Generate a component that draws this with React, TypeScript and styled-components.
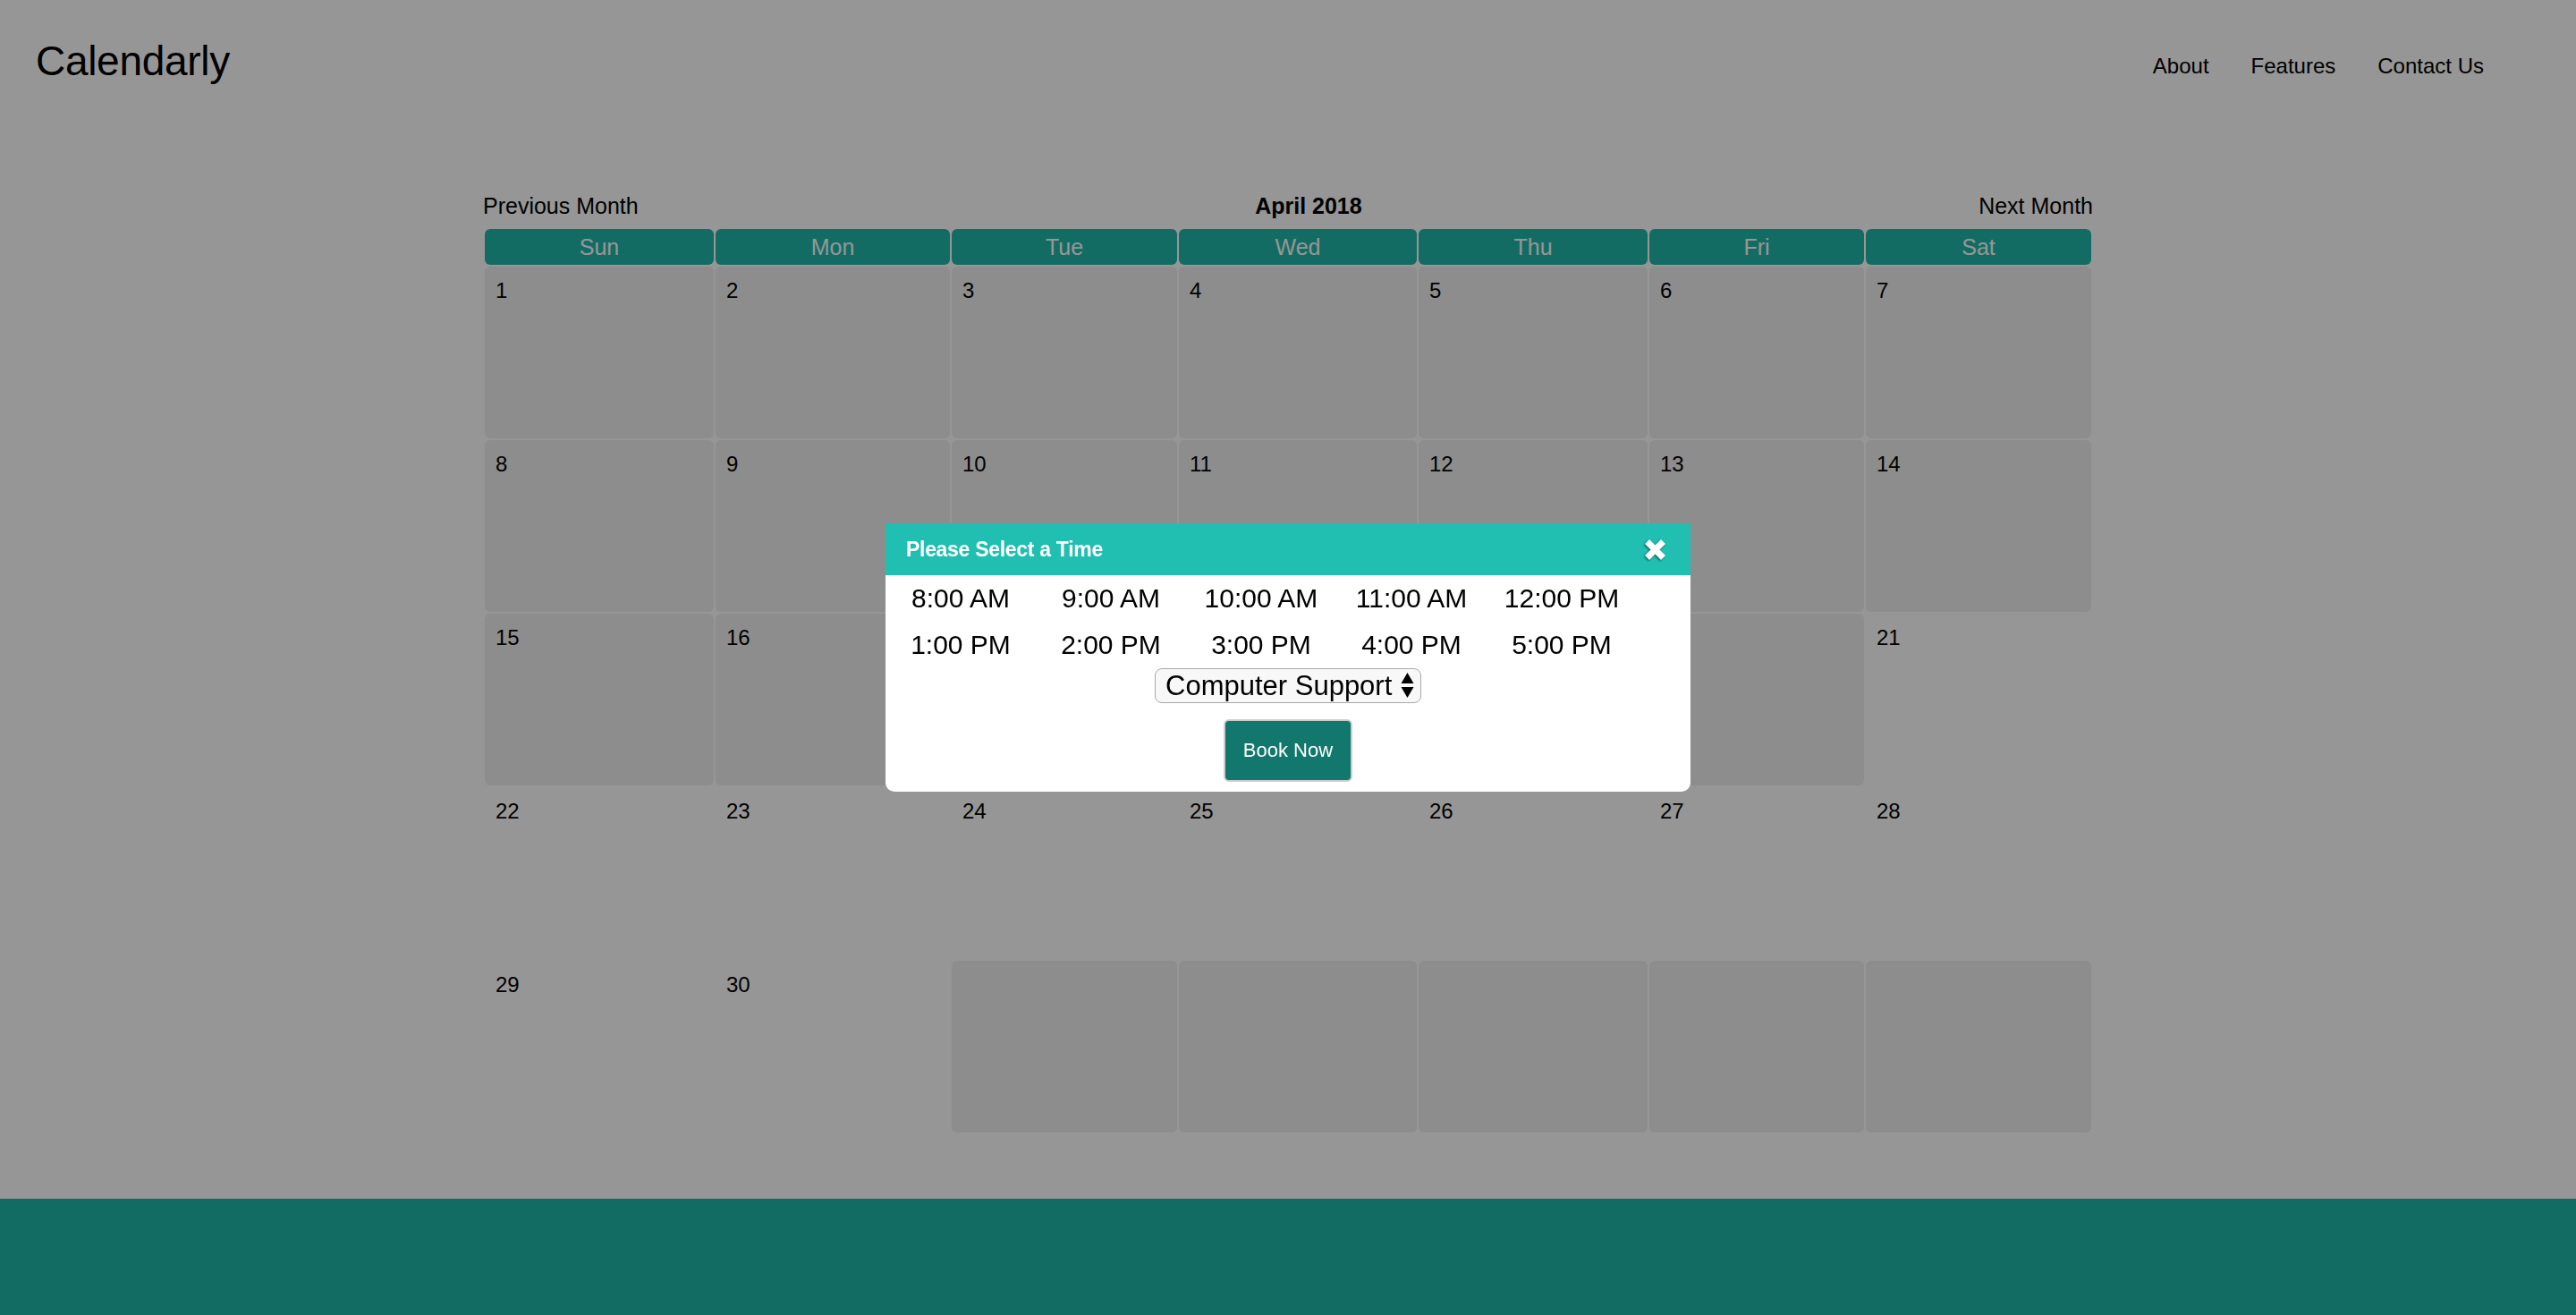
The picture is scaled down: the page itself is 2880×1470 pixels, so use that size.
import React from "react";
import styled, { createGlobalStyle } from "styled-components";

const GlobalStyle = createGlobalStyle`
  html, body { margin: 0; padding: 0; background: #ffffff; }
  body { font-family: "Liberation Sans", Arial, Helvetica, sans-serif; color: #000; }
  * { box-sizing: border-box; }
`;

const TEAL = "#1fb8a9";

const Page = styled.div`
  height: 100vh;
  display: flex;
  flex-direction: column;
  overflow: hidden;
`;

const TopBar = styled.header`
  display: flex;
  justify-content: space-between;
  align-items: flex-start;
  padding: 0 103px 0 40px;
  height: 216px;
  flex-shrink: 0;
`;

const Brand = styled.div`
  font-size: 46px;
  line-height: 45px;
  margin-top: 46px;
  letter-spacing: -0.3px;
`;

const Nav = styled.nav`
  display: flex;
  gap: 47px;
  margin-top: 61px;
`;

const NavLink = styled.a`
  font-size: 24px;
  line-height: 25px;
  color: #000;
  text-decoration: none;
`;

const CalendarWrap = styled.section`
  width: 1800px;
  margin: 0 auto;
  flex-shrink: 0;
`;

const Caption = styled.div`
  display: flex;
  justify-content: space-between;
  align-items: center;
  height: 28px;
  font-size: 25px;
  line-height: 28px;
  margin-bottom: 10px;
`;

const MonthTitle = styled.span`
  font-weight: bold;
`;

const Grid = styled.div`
  display: grid;
  grid-template-columns: 256fr 262fr 252fr 266fr 256fr 240fr 252fr;
  gap: 2px;
  padding: 2px;
`;

const DayHead = styled.div`
  height: 40px;
  background: ${TEAL};
  color: #fff;
  border-radius: 6px;
  font-size: 25px;
  display: flex;
  align-items: center;
  justify-content: center;
`;

const DayCell = styled.div<{ $shaded: boolean }>`
  height: 192px;
  border-radius: 6px;
  background: ${(p) => (p.$shaded ? "#f0f0f0" : "transparent")};
  padding: 13px 12px;
  font-size: 24px;
  line-height: 27px;
`;

const Footer = styled.footer`
  margin-top: 72px;
  flex: 1;
  background: ${TEAL};
`;

const Overlay = styled.div`
  position: fixed;
  inset: 0;
  background: rgba(0, 0, 0, 0.41);
`;

const Modal = styled.div`
  position: fixed;
  left: 50%;
  top: 50%;
  transform: translate(-50%, -50%);
  width: 900px;
  background: #fff;
  border-radius: 0 0 10px 10px;
  overflow: hidden;
`;

const ModalHeader = styled.div`
  height: 58px;
  background: #20bfb1;
  color: #fff;
  display: flex;
  align-items: center;
  justify-content: space-between;
  padding: 0 27px 0 23px;
`;

const ModalTitle = styled.span`
  font-size: 23px;
  font-weight: bold;
  letter-spacing: -0.3px;
`;

const CloseButton = styled.span`
  display: flex;
  width: 25px;
  height: 23px;
  margin-top: 1px;
  filter: drop-shadow(-1px 1px 1px rgba(0, 0, 0, 0.55));
`;

const ModalBody = styled.div`
  padding: 0 0 11px;
  display: flex;
  flex-direction: column;
  align-items: center;
`;

const Slots = styled.div`
  align-self: stretch;
  display: grid;
  grid-template-columns: repeat(5, 168px);
`;

const Slot = styled.div`
  text-align: center;
  font-size: 30px;
  line-height: 52px;
`;

const SelectWrap = styled.div`
  position: relative;
  width: 298px;
  height: 39px;
`;

const ServiceSelect = styled.select`
  appearance: none;
  -webkit-appearance: none;
  width: 100%;
  height: 100%;
  border: 1.5px solid #a8a8a8;
  border-radius: 8px;
  background: #f8f8f8;
  font-family: "Liberation Sans", Arial, sans-serif;
  font-size: 31px;
  color: #000;
  padding: 0 0 0 11px;
  outline: none;
`;

const SelectArrows = styled.svg`
  position: absolute;
  right: 8px;
  top: 5px;
  pointer-events: none;
`;

const BookButton = styled.button`
  margin-top: 18px;
  width: 144px;
  height: 70px;
  background: #12776c;
  color: #fff;
  border: 2px solid #cdcdcd;
  border-radius: 6px;
  font-family: "Liberation Sans", Arial, sans-serif;
  font-size: 22px;
`;

const DAYS = ["Sun", "Mon", "Tue", "Wed", "Thu", "Fri", "Sat"];
const TIMES = [
  "8:00 AM",
  "9:00 AM",
  "10:00 AM",
  "11:00 AM",
  "12:00 PM",
  "1:00 PM",
  "2:00 PM",
  "3:00 PM",
  "4:00 PM",
  "5:00 PM",
];

export default function App() {
  const cells: { n: number | null; shaded: boolean }[] = [];
  for (let d = 1; d <= 30; d++) cells.push({ n: d, shaded: d <= 20 });
  while (cells.length < 35) cells.push({ n: null, shaded: true });

  return (
    <>
      <GlobalStyle />
      <Page>
        <TopBar>
          <Brand>Calendarly</Brand>
          <Nav>
            <NavLink href="#">About</NavLink>
            <NavLink href="#">Features</NavLink>
            <NavLink href="#">Contact Us</NavLink>
          </Nav>
        </TopBar>
        <CalendarWrap>
          <Caption>
            <span>Previous Month</span>
            <MonthTitle>April 2018</MonthTitle>
            <span>Next Month</span>
          </Caption>
          <Grid>
            {DAYS.map((d) => (
              <DayHead key={d}>{d}</DayHead>
            ))}
            {cells.map((c, i) => (
              <DayCell key={i} $shaded={c.shaded}>
                {c.n ?? ""}
              </DayCell>
            ))}
          </Grid>
        </CalendarWrap>
        <Footer />
      </Page>
      <Overlay />
      <Modal>
        <ModalHeader>
          <ModalTitle>Please Select a Time</ModalTitle>
          <CloseButton>
            <svg width="25" height="23" viewBox="0 0 25 23">
              <path
                d="M3.5 2.5 L21.5 20.5 M21.5 2.5 L3.5 20.5"
                stroke="#fff"
                strokeWidth="7"
                strokeLinecap="butt"
              />
            </svg>
          </CloseButton>
        </ModalHeader>
        <ModalBody>
          <Slots>
            {TIMES.map((t) => (
              <Slot key={t}>{t}</Slot>
            ))}
          </Slots>
          <SelectWrap>
            <ServiceSelect defaultValue="Computer Support">
              <option>Computer Support</option>
            </ServiceSelect>
            <SelectArrows width="15" height="28" viewBox="0 0 15 28">
              <path d="M7.5 0 L14.5 12 L0.5 12 Z" fill="#000" />
              <path d="M0.5 16 L14.5 16 L7.5 28 Z" fill="#000" />
            </SelectArrows>
          </SelectWrap>
          <BookButton>Book Now</BookButton>
        </ModalBody>
      </Modal>
    </>
  );
}
